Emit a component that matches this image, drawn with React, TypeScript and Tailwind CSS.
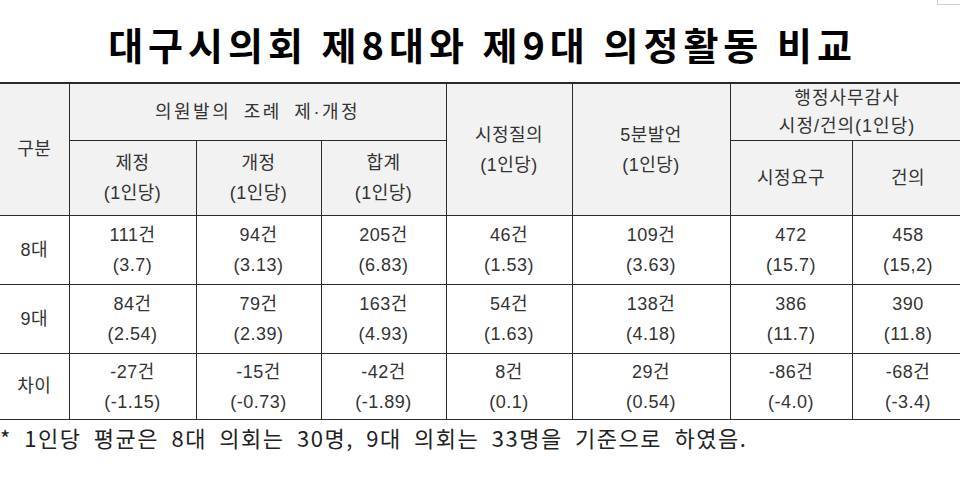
import React from "react";

const cell = "border border-[#2b2b2b] text-center align-middle p-0";
const hdr = `${cell} bg-[#f2f2f2] font-normal`;

type Row = { label: string; vals: [string, string][] };

const rows: Row[] = [
  {
    label: "8대",
    vals: [
      ["111건", "(3.7)"],
      ["94건", "(3.13)"],
      ["205건", "(6.83)"],
      ["46건", "(1.53)"],
      ["109건", "(3.63)"],
      ["472", "(15.7)"],
      ["458", "(15,2)"],
    ],
  },
  {
    label: "9대",
    vals: [
      ["84건", "(2.54)"],
      ["79건", "(2.39)"],
      ["163건", "(4.93)"],
      ["54건", "(1.63)"],
      ["138건", "(4.18)"],
      ["386", "(11.7)"],
      ["390", "(11.8)"],
    ],
  },
  {
    label: "차이",
    vals: [
      ["-27건", "(-1.15)"],
      ["-15건", "(-0.73)"],
      ["-42건", "(-1.89)"],
      ["8건", "(0.1)"],
      ["29건", "(0.54)"],
      ["-86건", "(-4.0)"],
      ["-68건", "(-3.4)"],
    ],
  },
];

const rowHeights = ["h-[69px]", "h-[69px]", "h-[66px]"];

function Two({ a, b, tight }: { a: string; b: string; tight?: boolean }) {
  return (
    <div className={`flex flex-col items-center ${tight ? "leading-[28px]" : "leading-[30px]"}`}>
      <span>{a}</span>
      <span>{b}</span>
    </div>
  );
}

export default function App() {
  return (
    <div className="relative w-[960px] h-[482px] overflow-hidden bg-white">
      <div className="absolute left-[937px] top-[-10px] w-[30px] h-[15px] border border-[#cfcfcf] bg-white" />
      <div
        className="h-[82px] flex items-center justify-center pt-[5px] pl-[5px] text-[38px] font-bold text-black tracking-[5px]"
        style={{ fontFamily: '"Noto Sans CJK KR", sans-serif' }}
      >
        대구시의회 제8대와 제9대 의정활동 비교
      </div>
      <table
        className="table-fixed border-collapse w-[964px] text-[18px] text-[#333] tracking-[0.5px]"
        style={{ fontFamily: '"Liberation Sans", "Noto Sans CJK KR", sans-serif' }}
      >
        <colgroup>
          <col className="w-[69px]" />
          <col className="w-[127px]" />
          <col className="w-[125px]" />
          <col className="w-[125px]" />
          <col className="w-[126px]" />
          <col className="w-[158px]" />
          <col className="w-[122px]" />
          <col className="w-[112px]" />
        </colgroup>
        <thead>
          <tr className="h-[56px] border-t-2 border-[#2b2b2b]">
            <th rowSpan={2} className={`${hdr} border-l-0`}>
              구분
            </th>
            <th colSpan={3} className={`${hdr} tracking-[2.5px] [word-spacing:5px]`}>
              의원발의 조례 제·개정
            </th>
            <th rowSpan={2} className={hdr}>
              <Two a="시정질의" b="(1인당)" />
            </th>
            <th rowSpan={2} className={hdr}>
              <Two a="5분발언" b="(1인당)" />
            </th>
            <th colSpan={2} className={`${hdr} tracking-[1px]`}>
              <Two a="행정사무감사" b="시정/건의(1인당)" tight />
            </th>
          </tr>
          <tr className="h-[75px]">
            <th className={hdr}>
              <Two a="제정" b="(1인당)" />
            </th>
            <th className={hdr}>
              <Two a="개정" b="(1인당)" />
            </th>
            <th className={hdr}>
              <Two a="합계" b="(1인당)" />
            </th>
            <th className={hdr}>시정요구</th>
            <th className={hdr}>건의</th>
          </tr>
        </thead>
        <tbody>
          {rows.map((r, i) => (
            <tr key={r.label} className={rowHeights[i]}>
              <td className={`${cell} border-l-0`}>{r.label}</td>
              {r.vals.map(([a, b], j) => (
                <td key={j} className={cell}>
                  <Two a={a} b={b} />
                </td>
              ))}
            </tr>
          ))}
        </tbody>
      </table>
      <div
        className="pt-[2px] text-[22px] text-[#222] tracking-[1.5px] [word-spacing:6px] leading-[30px]"
        style={{ fontFamily: '"Noto Sans CJK KR", sans-serif' }}
      >
        * 1인당 평균은 8대 의회는 30명, 9대 의회는 33명을 기준으로 하였음.
      </div>
    </div>
  );
}
